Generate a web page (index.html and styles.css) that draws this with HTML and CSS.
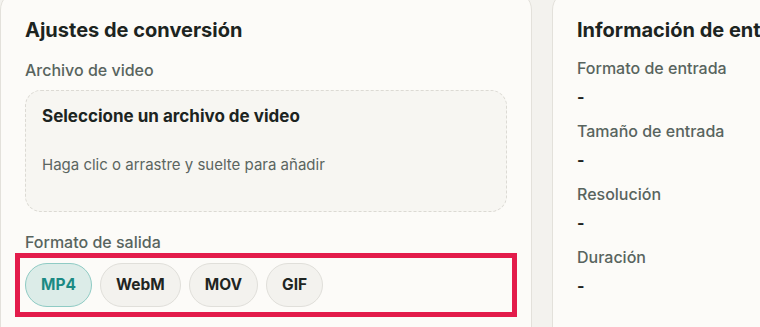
FILE: index.html
```html
<!DOCTYPE html>
<html lang="es">
<head>
    <meta charset="UTF-8">
    <meta name="viewport" content="width=device-width, initial-scale=1.0">
    <title>Ajustes de conversión</title>
    <link rel="stylesheet" href="styles.css">
</head>
<body>
    <div class="layout">
        <section class="card">
            <h2 class="card-title">Ajustes de conversión</h2>

            <div class="field">
                <p class="field-label">Archivo de video</p>
                <div class="dropzone">
                    <p class="dropzone-title">Seleccione un archivo de video</p>
                    <p class="dropzone-hint">Haga clic o arrastre y suelte para añadir</p>
                </div>
            </div>

            <div class="field">
                <p class="field-label">Formato de salida</p>
                <div class="formats">
                    <button class="chip active">MP4</button>
                    <button class="chip">WebM</button>
                    <button class="chip">MOV</button>
                    <button class="chip">GIF</button>
                </div>
            </div>
        </section>

        <section class="card">
            <h2 class="card-title">Información de entrada</h2>

            <dl class="info">
                <div class="info-row">
                    <dt>Formato de entrada</dt>
                    <dd>-</dd>
                </div>
                <div class="info-row">
                    <dt>Tamaño de entrada</dt>
                    <dd>-</dd>
                </div>
                <div class="info-row">
                    <dt>Resolución</dt>
                    <dd>-</dd>
                </div>
                <div class="info-row">
                    <dt>Duración</dt>
                    <dd>-</dd>
                </div>
            </dl>
        </section>
    </div>
</body>
</html>
```

FILE: styles.css
```css
* {
    margin: 0;
    padding: 0;
    box-sizing: border-box;
}

body {
    font-family: Inter, "Noto Sans", "Liberation Sans", sans-serif;
    background-color: #f3f2ee;
    color: #1c2421;
    overflow: hidden;
}

.layout {
    display: grid;
    grid-template-columns: 532px 532px;
    gap: 20px;
    margin-top: -10px;
}

.card {
    background-color: #fcfbf8;
    border: 1px solid #e3e1db;
    border-radius: 20px;
    padding: 25px 24px 40px;
}

.card-title {
    font-size: 20px;
    font-weight: 700;
    line-height: 28px;
    margin-bottom: 15px;
}

.field {
    margin-bottom: 19px;
}

.field-label {
    font-size: 16px;
    font-weight: 500;
    line-height: 22px;
    color: #58645e;
    margin-bottom: 9px;
}

.dropzone {
    min-height: 122px;
    border: 1px dashed #dcdad4;
    border-radius: 16px;
    background-color: #f7f6f2;
    padding: 13px 16px;
}

.dropzone-title {
    font-size: 17px;
    font-weight: 700;
    line-height: 24px;
    margin-bottom: 26px;
}

.dropzone-hint {
    font-size: 15px;
    line-height: 22px;
    color: #5b6560;
}

.formats {
    display: flex;
    gap: 8px;
    margin-top: 10px;
    outline: 5px solid #e31c4b;
    outline-offset: 5px;
}

.chip {
    font-family: inherit;
    font-size: 15.5px;
    font-weight: 700;
    line-height: 22px;
    padding: 10px 15px;
    border: 1px solid #e0dfda;
    border-radius: 9999px;
    background-color: #f3f2ee;
    color: #1f2522;
}

.chip.active {
    background-color: #dcece8;
    border-color: #8fcbc4;
    color: #1b8a84;
}

.info {
    margin-top: -2px;
}

.info-row {
    margin-bottom: 11px;
}

.info dt {
    font-size: 16px;
    font-weight: 500;
    line-height: 22px;
    color: #58645e;
    margin-bottom: 6px;
}

.info dd {
    font-size: 16px;
    font-weight: 700;
    line-height: 24px;
}
```
